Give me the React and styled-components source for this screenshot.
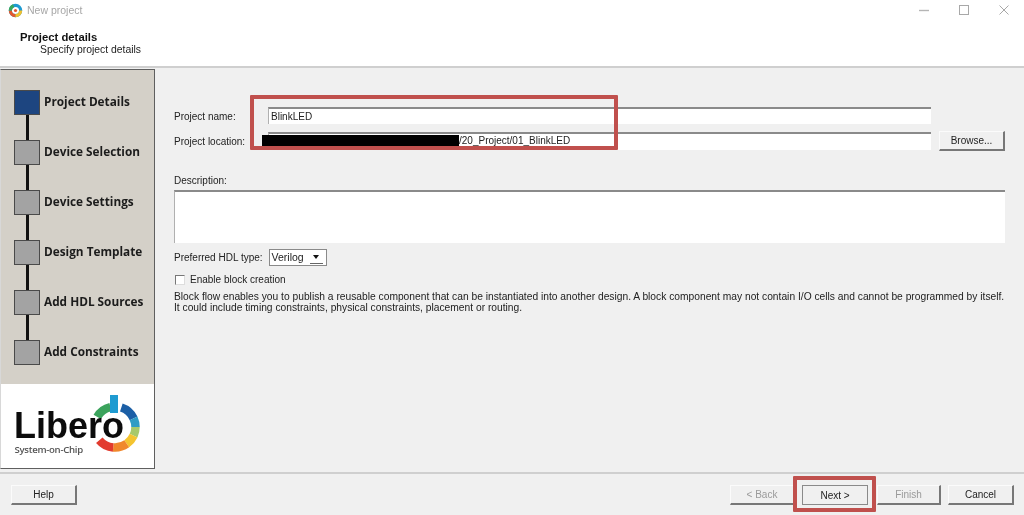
import React from 'react';
import styled, { createGlobalStyle } from 'styled-components';

const Global = createGlobalStyle`
  html, body { margin: 0; padding: 0; width: 1024px; height: 515px; overflow: hidden; background: #fff; }
  #root { width: 1024px; height: 515px; }
  * { box-sizing: border-box; }
`;

const Wizard = styled.div`
  position: relative;
  width: 1024px;
  height: 515px;
  display: flex;
  flex-direction: column;
  font-family: "Liberation Sans", Arial, sans-serif;
  font-size: 10px;
  color: #222;
  background: #f0f0f0;
  filter: blur(0.35px);
`;

const TitleBar = styled.div`
  height: 20px;
  flex: none;
  background: #fff;
  display: flex;
  align-items: center;
  padding: 0 15px 0 8px;
  gap: 4px;
`;
const TitleText = styled.span`
  font-size: 10.5px;
  color: #a6a6a6;
  flex: 1;
`;
const WindowButtons = styled.div`
  display: flex;
  gap: 30px;
`;

const Header = styled.div`
  height: 48px;
  flex: none;
  background: #fff;
  border-bottom: 2px solid #cfcfcf;
  padding: 11px 0 0 20px;
`;
const HeaderTitle = styled.div`
  font-size: 11.3px;
  font-weight: 700;
  line-height: 12px;
  color: #111;
`;
const HeaderSub = styled.div`
  font-size: 10.4px;
  line-height: 13px;
  padding-left: 20px;
`;

const Body = styled.div`
  flex: 1;
  min-height: 0;
  display: flex;
  align-items: flex-start;
`;

const Sidebar = styled.aside`
  width: 155px;
  height: 400px;
  margin-top: 1px;
  flex: none;
  display: flex;
  flex-direction: column;
  border: 1px solid #5f5f5f;
  border-left: 1px solid #d8d8d8;
  background: #d4d0c8;
`;
const Steps = styled.div`
  height: 314px;
  flex: none;
  padding: 20px 0 0 13px;
  display: flex;
  flex-direction: column;
`;
const Step = styled.div`
  height: 25px;
  flex: none;
  display: flex;
  align-items: center;
  gap: 4px;
`;
const StepBox = styled.div`
  width: 26px;
  height: 25px;
  flex: none;
  border: 1px solid #4a4a4a;
  background: ${p => (p.$active ? '#1d4580' : '#a3a3a3')};
`;
const StepLabel = styled.span`
  font-family: "Open Sans", "Liberation Sans", sans-serif;
  font-weight: 700;
  font-size: 11.8px;
  line-height: 14px;
  padding-bottom: 4px;
  color: #1c1c1c;
  white-space: nowrap;
`;
const Connector = styled.div`
  width: 3px;
  height: 25px;
  flex: none;
  margin-left: 12px;
  background: #111;
`;
const LogoPanel = styled.div`
  flex: 1;
  background: #fff;
  display: flex;
  align-items: flex-start;
`;

const Main = styled.main`
  flex: 1;
  min-width: 0;
  padding: 39px 0 0 19px;
`;
const TopGrid = styled.div`
  display: grid;
  grid-template-columns: 94px 663px 74px;
  grid-template-rows: 17px 18px;
  row-gap: 8px;
  align-items: center;
`;
const FieldLabel = styled.label`
  line-height: 12px;
  padding-top: 2px;
  white-space: nowrap;
`;
const TextField = styled.div`
  height: 100%;
  display: flex;
  align-items: center;
  background: #fff;
  border-top: 2px solid #8a8a8a;
  border-left: 1px solid #b0b0b0;
  padding: 0 0 ${p => p.$lift || 0}px 2px;
  font-size: 10px;
  white-space: nowrap;
`;
const Redacted = styled.span`
  width: 197px;
  height: 14px;
  flex: none;
  margin-left: -9px;
  margin-top: 3px;
  background: #000;
`;
const Btn = styled.button`
  height: 20px;
  width: ${p => p.$w || 66}px;
  margin: 0 0 0 ${p => p.$ml || 0}px;
  padding: 0;
  font: inherit;
  color: ${p => (p.$off ? '#9a9a9a' : '#222')};
  background: #f0f0f0;
  border-style: solid;
  border-width: ${p => (p.$focus ? '1px' : '1px 2px 2px 1px')};
  border-color: ${p => (p.$focus ? '#8a8a8a' : '#fbfbfb #777 #777 #fbfbfb')};
`;
const BrowseBtn = styled(Btn)`
  justify-self: end;
`;
const DescLabel = styled.div`
  margin-top: 25px;
  height: 15px;
  line-height: 12px;
`;
const DescBox = styled.div`
  width: 831px;
  height: 53px;
  background: #fff;
  border-top: 2px solid #8a8a8a;
  border-left: 1px solid #b0b0b0;
`;
const HdlRow = styled.div`
  margin-top: 6px;
  height: 16px;
  display: flex;
  align-items: center;
  gap: 6px;
`;
const Select = styled.div`
  width: 58px;
  height: 17px;
  display: flex;
  align-items: center;
  justify-content: space-between;
  padding: 0 3px 0 2px;
  font-size: 10.5px;
  background: #fff;
  border: 1px solid #8a8a8a;
`;
const ArrowBox = styled.span`
  width: 13px;
  height: 14px;
  display: flex;
  align-items: center;
  justify-content: center;
  border-bottom: 1px solid #666;
`;
const Arrow = styled.span`
  width: 0;
  height: 0;
  border-left: 3.5px solid transparent;
  border-right: 3.5px solid transparent;
  border-top: 4px solid #111;
`;
const CheckRow = styled.div`
  margin-top: 9px;
  height: 11px;
  display: flex;
  align-items: center;
  gap: 5px;
  padding-left: 1px;
`;
const CheckBox = styled.span`
  width: 10px;
  height: 10px;
  background: #fff;
  border-style: solid;
  border-width: 1px;
  border-color: #777 #ddd #ddd #777;
`;
const Help = styled.p`
  margin: 6px 0 0;
  line-height: 11px;
  font-size: 10.25px;
  white-space: nowrap;
`;

const Footer = styled.footer`
  height: 43px;
  flex: none;
  border-top: 2px solid #cfcfcf;
  padding: 11px 10px 0 11px;
  display: flex;
`;
const FooterGap = styled.div`
  flex: 1;
`;

const Highlight = styled.div`
  position: absolute;
  left: ${p => p.$x}px;
  top: ${p => p.$y}px;
  width: ${p => p.$w}px;
  height: ${p => p.$h}px;
  border: 4px solid #c0504d;
  border-radius: 1px;
`;

const AppIcon = () => (
  <svg width="15" height="15" viewBox="0 0 16 16">
    <circle cx="8" cy="8" r="5.5" fill="none" stroke="#1f9bd1" strokeWidth="3.4" />
    <path d="M2.5 8A5.5 5.5 0 0 0 8 13.5" fill="none" stroke="#e4572e" strokeWidth="3.4" />
    <path d="M8 13.5A5.5 5.5 0 0 0 13.5 8" fill="none" stroke="#f3c02c" strokeWidth="3.4" />
    <path d="M2.5 8A5.5 5.5 0 0 1 6 2.9" fill="none" stroke="#39a85b" strokeWidth="3.4" />
    <circle cx="8" cy="8" r="1.7" fill="#e4572e" />
  </svg>
);

const Arc = ({ a0, a1, color }) => {
  const cx = 114, cy = 43, r = 20.5;
  const p = a => [cx + r * Math.cos((a * Math.PI) / 180), cy + r * Math.sin((a * Math.PI) / 180)];
  const [x0, y0] = p(a0);
  const [x1, y1] = p(a1);
  return <path d={`M${x0} ${y0}A${r} ${r} 0 0 1 ${x1} ${y1}`} fill="none" stroke={color} strokeWidth="8.5" />;
};

const LogoMark = () => (
  <svg width="153" height="84" viewBox="0 0 153 84">
    <Arc a0={-150} a1={-103} color="#3ba35c" />
    <Arc a0={-72} a1={-25} color="#1c5fa6" />
    <Arc a0={-25} a1={0} color="#2f9cc4" />
    <Arc a0={0} a1={25} color="#a8c96a" />
    <Arc a0={25} a1={55} color="#f4c430" />
    <Arc a0={55} a1={95} color="#f0882c" />
    <Arc a0={95} a1={140} color="#e23b2e" />
    <rect x="109" y="11" width="8" height="18" fill="#1f9bd1" />
    <text x="13" y="54" fontFamily="Liberation Sans" fontWeight="700" fontSize="36" fill="#0c0c0c">Libero</text>
    <text x="13.5" y="69" fontFamily="Open Sans" fontWeight="600" fontSize="9.6" letterSpacing="-0.3" fill="#555">System-on-Chip</text>
  </svg>
);

const stepNames = ['Project Details', 'Device Selection', 'Device Settings', 'Design Template', 'Add HDL Sources', 'Add Constraints'];

export default function App() {
  return (
    <>
      <Global />
      <Wizard>
        <TitleBar>
          <AppIcon />
          <TitleText>New project</TitleText>
          <WindowButtons>
            <svg width="10" height="10" viewBox="0 0 10 10"><path d="M0 5.5H10" stroke="#b5b5b5" strokeWidth="1.4" /></svg>
            <svg width="10" height="10" viewBox="0 0 10 10"><rect x=".5" y=".5" width="9" height="9" fill="none" stroke="#a8a8a8" /></svg>
            <svg width="10" height="10" viewBox="0 0 10 10"><path d="M.5.5l9 9M9.5.5l-9 9" stroke="#a8a8a8" /></svg>
          </WindowButtons>
        </TitleBar>
        <Header>
          <HeaderTitle>Project details</HeaderTitle>
          <HeaderSub>Specify project details</HeaderSub>
        </Header>
        <Body>
          <Sidebar>
            <Steps>
              {stepNames.map((n, i) => (
                <React.Fragment key={n}>
                  {i > 0 && <Connector />}
                  <Step>
                    <StepBox $active={i === 0} />
                    <StepLabel>{n}</StepLabel>
                  </Step>
                </React.Fragment>
              ))}
            </Steps>
            <LogoPanel><LogoMark /></LogoPanel>
          </Sidebar>
          <Main>
            <TopGrid>
              <FieldLabel>Project name:</FieldLabel>
              <TextField>BlinkLED</TextField>
              <span />
              <FieldLabel>Project location:</FieldLabel>
              <TextField $lift={4}>
                <Redacted />
                /20_Project/01_BlinkLED
              </TextField>
              <BrowseBtn $w={66}>Browse...</BrowseBtn>
            </TopGrid>
            <DescLabel>Description:</DescLabel>
            <DescBox />
            <HdlRow>
              <span>Preferred HDL type:</span>
              <Select>Verilog<ArrowBox><Arrow /></ArrowBox></Select>
            </HdlRow>
            <CheckRow>
              <CheckBox />
              <span>Enable block creation</span>
            </CheckRow>
            <Help>
              Block flow enables you to publish a reusable component that can be instantiated into another design. A block component may not contain I/O cells and cannot be programmed by itself.
              <br />
              It could include timing constraints, physical constraints, placement or routing.
            </Help>
          </Main>
        </Body>
        <Footer>
          <Btn>Help</Btn>
          <FooterGap />
          <Btn $off $w={65}>&lt; Back</Btn>
          <Btn $focus $ml={7}>Next &gt;</Btn>
          <Btn $off $w={64} $ml={9}>Finish</Btn>
          <Btn $ml={7}>Cancel</Btn>
        </Footer>
        <Highlight $x={250} $y={95} $w={368} $h={55} />
        <Highlight $x={793} $y={476} $w={83} $h={36} />
      </Wizard>
    </>
  );
}
